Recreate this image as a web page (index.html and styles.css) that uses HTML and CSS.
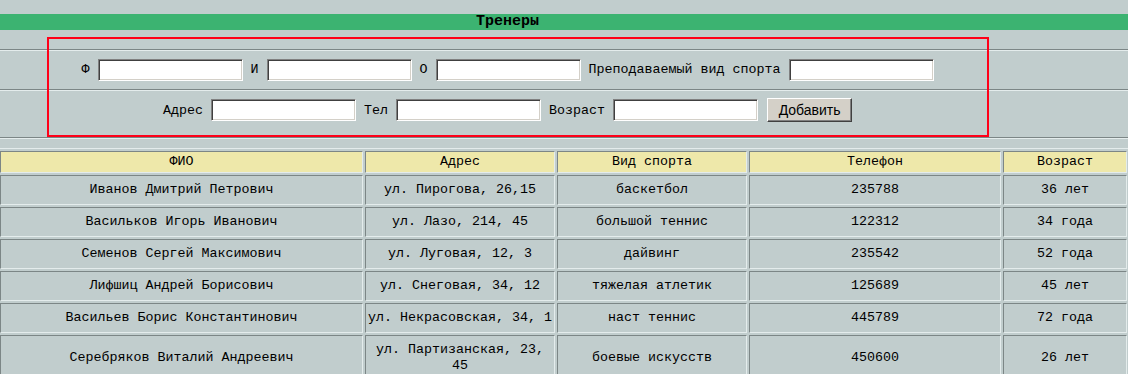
FILE: index.html
```html
<!DOCTYPE html>
<html lang="ru">
<head>
    <meta charset="UTF-8">
    <title>Тренеры</title>
    <link rel="stylesheet" href="styles.css">
</head>
<body>
    <div class="title-bar">
        <div class="title">Тренеры</div>
    </div>

    <form class="add-form">
        <div class="form-row">
            <div class="form-line">
                <span>Ф</span><input type="text" class="field">
                <span>И</span><input type="text" class="field">
                <span>О</span><input type="text" class="field">
                <span>Преподаваемый вид спорта</span><input type="text" class="field">
            </div>
        </div>
        <div class="form-row second">
            <div class="form-line">
                <span>Адрес</span><input type="text" class="field">
                <span>Тел</span><input type="text" class="field">
                <span>Возраст</span><input type="text" class="field">
                <button type="button" class="add-btn">Добавить</button>
            </div>
        </div>
    </form>

    <!-- red highlight around the form -->
    <div class="frame"></div>

    <table class="trainers">
        <thead>
            <tr>
                <th class="col-name">ФИО</th>
                <th class="col-addr">Адрес</th>
                <th class="col-sport">Вид спорта</th>
                <th class="col-phone">Телефон</th>
                <th class="col-age">Возраст</th>
            </tr>
        </thead>
        <tbody>
            <tr>
                <td>Иванов Дмитрий Петрович</td>
                <td>ул. Пирогова, 26,15</td>
                <td>баскетбол</td>
                <td>235788</td>
                <td>36 лет</td>
            </tr>
            <tr>
                <td>Васильков Игорь Иванович</td>
                <td>ул. Лазо, 214, 45</td>
                <td>большой теннис</td>
                <td>122312</td>
                <td>34 года</td>
            </tr>
            <tr>
                <td>Семенов Сергей Максимович</td>
                <td>ул. Луговая, 12, 3</td>
                <td>дайвинг</td>
                <td>235542</td>
                <td>52 года</td>
            </tr>
            <tr>
                <td>Лифшиц Андрей Борисович</td>
                <td>ул. Снеговая, 34, 12</td>
                <td>тяжелая атлетик</td>
                <td>125689</td>
                <td>45 лет</td>
            </tr>
            <tr>
                <td>Васильев Борис Константинович</td>
                <td>ул. Некрасовская, 34, 1</td>
                <td>наст теннис</td>
                <td>445789</td>
                <td>72 года</td>
            </tr>
            <tr>
                <td>Серебряков Виталий Андреевич</td>
                <td>ул. Партизанская, 23, 45</td>
                <td>боевые искусств</td>
                <td>450600</td>
                <td>26 лет</td>
            </tr>
        </tbody>
    </table>
</body>
</html>
```

FILE: styles.css
```css
body {
    margin: 0;
    padding-top: 14px;
    background-color: #c1cdcd;
    font-family: 'Liberation Mono', 'Courier New', monospace;
    font-size: 13.33px;
    color: #000;
    position: relative;
}

.title-bar {
    height: 16px;
    background-color: #3cb371; /* medium sea green */
}

.title {
    width: 90%;
    text-align: center;
    font-weight: bold;
    font-size: 15px;
    line-height: 16px;
}

.add-form {
    margin: 19px 0 0;
    border-bottom: 1px solid #e4ecec;
}

.form-row {
    height: 40px;
    box-sizing: border-box;
    display: flex;
    align-items: center;
    border-top: 1px solid #7c8686;
    box-shadow: inset 0 1px 0 #e4ecec;
}

.form-row.second {
    height: 49px;
    align-items: flex-start;
    padding-top: 8px;
    border-bottom: 1px solid #7c8686;
}

.form-line {
    width: 90%;
    display: flex;
    align-items: center;
    justify-content: center;
    gap: 8px;
}

.field {
    width: 145px;
    height: 22px;
    box-sizing: border-box;
    margin: 0;
    padding: 1px 3px;
    background-color: #fff;
    border: 1px solid;
    border-color: #808080 #fff #fff #808080;
    box-shadow: inset 1px 1px 0 #404040, inset -1px -1px 0 #d4d0c8;
    font-family: 'Liberation Sans', Arial, sans-serif;
    font-size: 13px;
}

.add-btn {
    width: 85px;
    height: 24px;
    margin-left: 1px;
    padding: 0;
    background-color: #d4d0c8;
    border: 1px solid;
    border-color: #fff #404040 #404040 #fff;
    box-shadow: inset -1px -1px 0 #808080;
    font-family: 'Liberation Sans', Arial, sans-serif;
    font-size: 14px;
    color: #000;
}

.frame {
    position: absolute;
    left: 47px;
    top: 37px;
    width: 942px;
    height: 100px;
    box-sizing: border-box;
    border: 2px solid #ff0019;
    pointer-events: none;
}

.trainers {
    margin: 9px 0 0 -3px;
    width: 1131px;
    table-layout: fixed;
    border-collapse: separate;
    border-spacing: 2px;
    border: 1px solid;
    border-color: #e4ecec #7c8686 #7c8686 #e4ecec;
}

.trainers th,
.trainers td {
    box-sizing: border-box;
    text-align: center;
    border: 1px solid;
    border-color: #7c8686 #e4ecec #e4ecec #7c8686;
    line-height: 16px;
}

.trainers th {
    font-weight: normal;
    background-color: #eee8aa;
    padding: 2px 1px;
}

.trainers td {
    padding: 6px 1px;
}

.col-name { width: 363px; }
.col-addr { width: 190px; }
.col-sport { width: 190px; }
.col-phone { width: 252px; }
.col-age { width: 124px; }
```
